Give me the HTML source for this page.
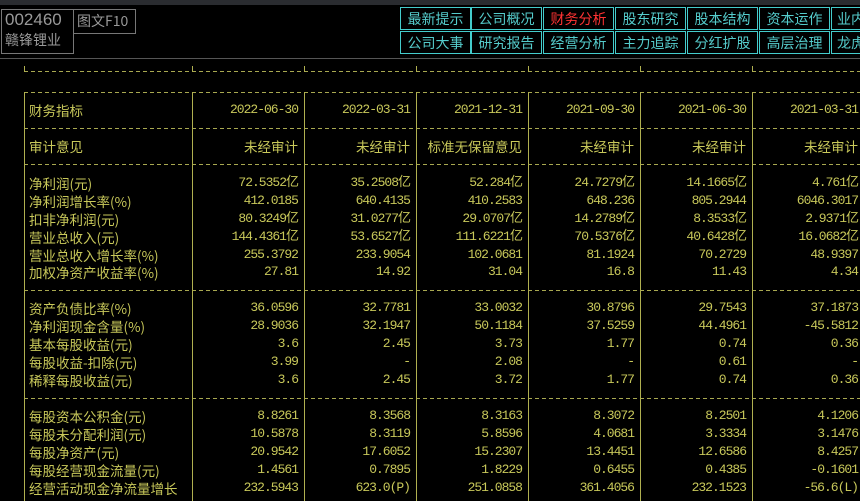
<!DOCTYPE html><html><head><meta charset="utf-8"><style>
body{margin:0;width:860px;height:501px;background:#000;overflow:hidden;position:relative;font-family:"Liberation Mono","Noto Sans CJK SC",monospace;color:#c8c85a}
.top{position:absolute;left:0;top:0;width:860px;height:5px;background:#2a2c30}
.hl{position:absolute;left:0;top:58px;width:860px;height:1px;background:#555}
.box{position:absolute;border:1px solid #777;color:#999;font-family:"Liberation Sans","Noto Sans CJK SC",sans-serif;font-size:15px}
.nav{position:absolute;left:400px;top:7px;width:470px;height:48px}
.nav div{position:absolute;height:23px;width:71px;border:1px solid #4cc;color:#5cc;font-family:"Noto Sans CJK SC",sans-serif;font-size:14px;line-height:22px;text-align:center;box-sizing:border-box}
.nav div.l{text-align:left;padding-left:5px}
.dash{position:absolute;left:24px;width:850px;height:1px;background:repeating-linear-gradient(90deg,#a8a850 0 4px,transparent 4px 7px)}
.v{position:absolute;width:1px;background:#b0b050}
.row{position:absolute;left:24px;height:18px;font-size:12px;line-height:18px;white-space:nowrap}
.row span{position:absolute;top:0;text-align:right;width:106px;font-size:13px;letter-spacing:-1px}
.row b{font-weight:normal;position:absolute;left:5px;font-family:"Noto Sans CJK SC",sans-serif;font-size:13.5px;letter-spacing:0}
</style></head><body>
<div class="top"></div>
<div class="box" style="left:1px;top:9px;width:68px;height:43px;line-height:20px;padding-left:3px;font-size:17px">002460<br><span style="font-family:'Noto Sans CJK SC';font-size:14px">赣锋锂业</span></div>
<div class="box" style="left:73px;top:9px;width:58px;height:23px;line-height:23px;padding-left:3px;font-family:'Noto Sans CJK SC';font-size:14px">图文F10</div>
<div class="nav">
<div style="left:0;top:0">最新提示</div><div style="left:71px;top:0">公司概况</div><div style="left:143px;top:0;color:#f33">财务分析</div><div style="left:215px;top:0">股东研究</div><div style="left:287px;top:0">股本结构</div><div style="left:359px;top:0">资本运作</div><div class="l" style="left:431px;top:0">业内</div>
<div style="left:0;top:24px">公司大事</div><div style="left:71px;top:24px">研究报告</div><div style="left:143px;top:24px">经营分析</div><div style="left:215px;top:24px">主力追踪</div><div style="left:287px;top:24px">分红扩股</div><div style="left:359px;top:24px">高层治理</div><div class="l" style="left:431px;top:24px">龙虎</div>
</div>
<div class="hl"></div>
<div class="dash" style="top:71px"></div>
<div class="dash" style="top:92px"></div>
<div class="dash" style="top:164px"></div>
<div class="dash" style="top:128px"></div>
<div class="dash" style="top:290px"></div>
<div class="dash" style="top:398px"></div>
<div class="v" style="left:24px;top:66px;height:6px"></div>
<div class="v" style="left:192px;top:66px;height:6px"></div>
<div class="v" style="left:304px;top:66px;height:6px"></div>
<div class="v" style="left:416px;top:66px;height:6px"></div>
<div class="v" style="left:528px;top:66px;height:6px"></div>
<div class="v" style="left:640px;top:66px;height:6px"></div>
<div class="v" style="left:752px;top:66px;height:6px"></div>
<div class="v" style="left:24px;top:92px;height:409px"></div>
<div class="v" style="left:192px;top:92px;height:409px"></div>
<div class="v" style="left:304px;top:92px;height:409px"></div>
<div class="v" style="left:416px;top:92px;height:409px"></div>
<div class="v" style="left:528px;top:92px;height:409px"></div>
<div class="v" style="left:640px;top:92px;height:409px"></div>
<div class="v" style="left:752px;top:92px;height:409px"></div>

<div class="row" style="top:101px"><b>财务指标</b><span style="left:168px">2022-06-30</span><span style="left:280px">2022-03-31</span><span style="left:392px">2021-12-31</span><span style="left:504px">2021-09-30</span><span style="left:616px">2021-06-30</span><span style="left:728px">2021-03-31</span></div>
<div class="row" style="top:137px"><b>审计意见</b><span style="left:168px"><b style="position:static">未经审计</b></span><span style="left:280px"><b style="position:static">未经审计</b></span><span style="left:392px"><b style="position:static">标准无保留意见</b></span><span style="left:504px"><b style="position:static">未经审计</b></span><span style="left:616px"><b style="position:static">未经审计</b></span><span style="left:728px"><b style="position:static">未经审计</b></span></div>

<div class="row" style="top:174px"><b>净利润(元)</b><span style="left:168px">72.5352亿</span><span style="left:280px">35.2508亿</span><span style="left:392px">52.284亿</span><span style="left:504px">24.7279亿</span><span style="left:616px">14.1665亿</span><span style="left:728px">4.761亿</span></div>
<div class="row" style="top:192px"><b>净利润增长率(%)</b><span style="left:168px">412.0185</span><span style="left:280px">640.4135</span><span style="left:392px">410.2583</span><span style="left:504px">648.236</span><span style="left:616px">805.2944</span><span style="left:728px">6046.3017</span></div>
<div class="row" style="top:210px"><b>扣非净利润(元)</b><span style="left:168px">80.3249亿</span><span style="left:280px">31.0277亿</span><span style="left:392px">29.0707亿</span><span style="left:504px">14.2789亿</span><span style="left:616px">8.3533亿</span><span style="left:728px">2.9371亿</span></div>
<div class="row" style="top:228px"><b>营业总收入(元)</b><span style="left:168px">144.4361亿</span><span style="left:280px">53.6527亿</span><span style="left:392px">111.6221亿</span><span style="left:504px">70.5376亿</span><span style="left:616px">40.6428亿</span><span style="left:728px">16.0682亿</span></div>
<div class="row" style="top:246px"><b>营业总收入增长率(%)</b><span style="left:168px">255.3792</span><span style="left:280px">233.9054</span><span style="left:392px">102.0681</span><span style="left:504px">81.1924</span><span style="left:616px">70.2729</span><span style="left:728px">48.9397</span></div>
<div class="row" style="top:263px"><b>加权净资产收益率(%)</b><span style="left:168px">27.81</span><span style="left:280px">14.92</span><span style="left:392px">31.04</span><span style="left:504px">16.8</span><span style="left:616px">11.43</span><span style="left:728px">4.34</span></div>

<div class="row" style="top:299px"><b>资产负债比率(%)</b><span style="left:168px">36.0596</span><span style="left:280px">32.7781</span><span style="left:392px">33.0032</span><span style="left:504px">30.8796</span><span style="left:616px">29.7543</span><span style="left:728px">37.1873</span></div>
<div class="row" style="top:317px"><b>净利润现金含量(%)</b><span style="left:168px">28.9036</span><span style="left:280px">32.1947</span><span style="left:392px">50.1184</span><span style="left:504px">37.5259</span><span style="left:616px">44.4961</span><span style="left:728px">-45.5812</span></div>
<div class="row" style="top:335px"><b>基本每股收益(元)</b><span style="left:168px">3.6</span><span style="left:280px">2.45</span><span style="left:392px">3.73</span><span style="left:504px">1.77</span><span style="left:616px">0.74</span><span style="left:728px">0.36</span></div>
<div class="row" style="top:353px"><b>每股收益-扣除(元)</b><span style="left:168px">3.99</span><span style="left:280px">-</span><span style="left:392px">2.08</span><span style="left:504px">-</span><span style="left:616px">0.61</span><span style="left:728px">-</span></div>
<div class="row" style="top:371px"><b>稀释每股收益(元)</b><span style="left:168px">3.6</span><span style="left:280px">2.45</span><span style="left:392px">3.72</span><span style="left:504px">1.77</span><span style="left:616px">0.74</span><span style="left:728px">0.36</span></div>

<div class="row" style="top:407px"><b>每股资本公积金(元)</b><span style="left:168px">8.8261</span><span style="left:280px">8.3568</span><span style="left:392px">8.3163</span><span style="left:504px">8.3072</span><span style="left:616px">8.2501</span><span style="left:728px">4.1206</span></div>
<div class="row" style="top:425px"><b>每股未分配利润(元)</b><span style="left:168px">10.5878</span><span style="left:280px">8.3119</span><span style="left:392px">5.8596</span><span style="left:504px">4.0681</span><span style="left:616px">3.3334</span><span style="left:728px">3.1476</span></div>
<div class="row" style="top:443px"><b>每股净资产(元)</b><span style="left:168px">20.9542</span><span style="left:280px">17.6052</span><span style="left:392px">15.2307</span><span style="left:504px">13.4451</span><span style="left:616px">12.6586</span><span style="left:728px">8.4257</span></div>
<div class="row" style="top:461px"><b>每股经营现金流量(元)</b><span style="left:168px">1.4561</span><span style="left:280px">0.7895</span><span style="left:392px">1.8229</span><span style="left:504px">0.6455</span><span style="left:616px">0.4385</span><span style="left:728px">-0.1601</span></div>
<div class="row" style="top:479px"><b>经营活动现金净流量增长</b><span style="left:168px">232.5943</span><span style="left:280px">623.0(P)</span><span style="left:392px">251.0858</span><span style="left:504px">361.4056</span><span style="left:616px">232.1523</span><span style="left:728px">-56.6(L)</span></div>
</body></html>
